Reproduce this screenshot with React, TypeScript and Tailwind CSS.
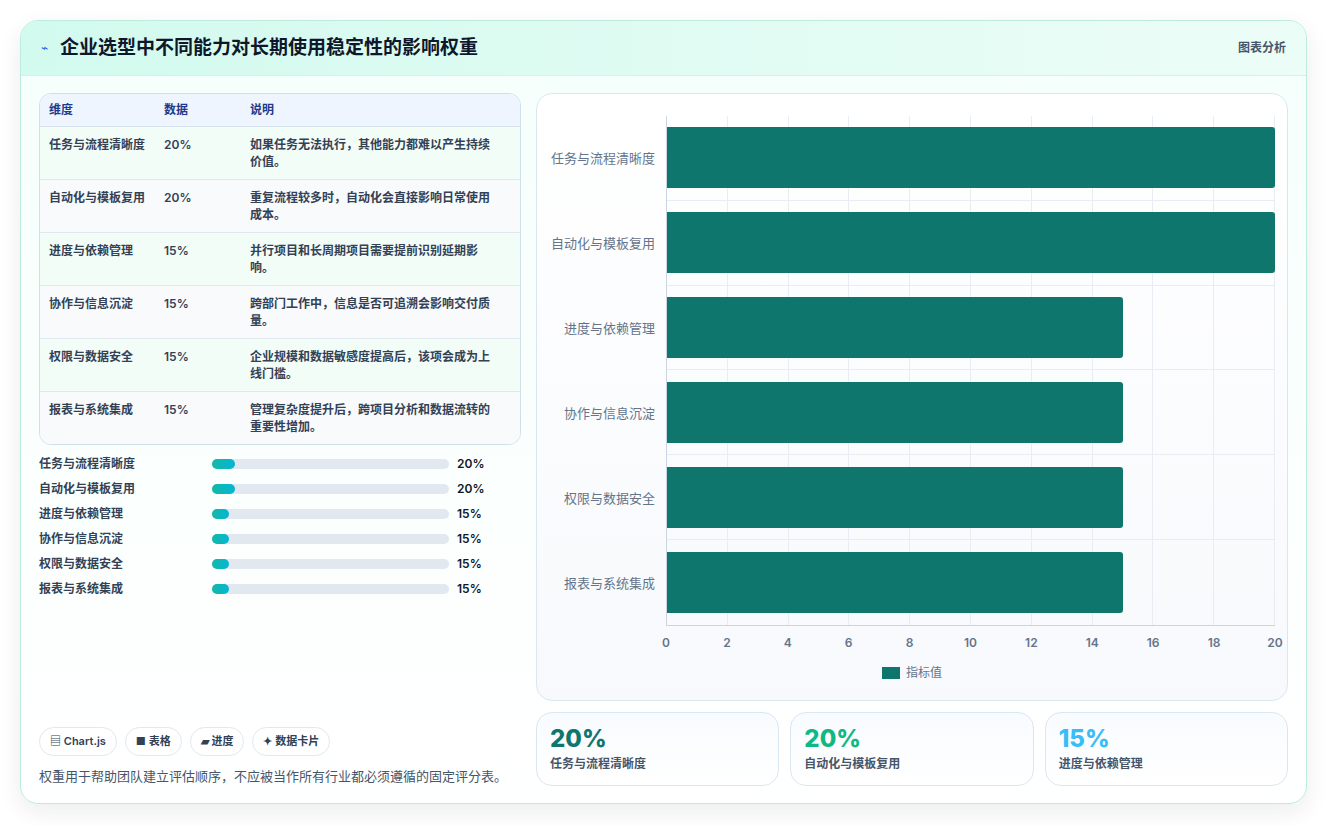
const rows = [
  { name: '任务与流程清晰度', value: 20, note: '如果任务无法执行，其他能力都难以产生持续价值。' },
  { name: '自动化与模板复用', value: 20, note: '重复流程较多时，自动化会直接影响日常使用成本。' },
  { name: '进度与依赖管理', value: 15, note: '并行项目和长周期项目需要提前识别延期影响。' },
  { name: '协作与信息沉淀', value: 15, note: '跨部门工作中，信息是否可追溯会影响交付质量。' },
  { name: '权限与数据安全', value: 15, note: '企业规模和数据敏感度提高后，该项会成为上线门槛。' },
  { name: '报表与系统集成', value: 15, note: '管理复杂度提升后，跨项目分析和数据流转的重要性增加。' },
];

const ticks = [0, 2, 4, 6, 8, 10, 12, 14, 16, 18, 20];

function Chart() {
  return (
    <div className="flex flex-1 flex-col rounded-2xl border border-[#dbe7f0] bg-gradient-to-b from-white to-[#f7f9fc] px-3 pb-5 pt-[22px]">
      <div className="flex">
        <div className="flex w-[117px] flex-col pr-[11px]">
          {rows.map((r) => (
            <div key={r.name} className="flex h-[85px] items-center justify-end text-[13px] text-[#64748b]">
              {r.name}
            </div>
          ))}
        </div>
        <div className="relative h-[510px] flex-1 border-b border-l border-[#cbd5e1]">
          <div className="absolute inset-0 flex">
            {ticks.slice(1).map((t) => (
              <div key={t} className="flex-1 border-r border-[#e8edf3]" />
            ))}
          </div>
          <div className="absolute inset-0 flex flex-col">
            {rows.map((r, i) => (
              <div key={r.name} className={`flex h-[85px] items-center ${i < 5 ? 'border-b border-[#e8edf3]' : ''}`}>
                <div className="relative h-[61px] rounded-r-[3px] bg-[#0f766e]" style={{ width: `${(r.value / 20) * 100}%` }} />
              </div>
            ))}
          </div>
        </div>
      </div>
      <div className="ml-[117px] mt-[8px] flex justify-between text-[12px] font-semibold text-[#64748b]">
        {ticks.map((t) => (
          <span key={t} className="w-0 text-center" style={{ display: 'flex', justifyContent: 'center' }}>
            {t}
          </span>
        ))}
      </div>
      <div className="mt-[12px] flex items-center justify-center gap-[6px] text-[12px] text-[#64748b]">
        <span className="h-[12px] w-[18px] bg-[#0f766e]" />
        指标值
      </div>
    </div>
  );
}

export default function App() {
  return (
    <div className="min-h-[825px] bg-white p-5" style={{ fontFamily: 'Inter, "Noto Sans CJK SC", sans-serif' }}>
      <div className="overflow-hidden rounded-[18px] border border-[#bdebdc] bg-gradient-to-b from-[#f5fffc] to-white shadow-[0_8px_24px_rgba(15,23,42,0.08)]">
        <div className="flex h-[55px] items-center justify-between border-b border-[#d4f2e8] bg-gradient-to-r from-[#d2faee] to-[#ecfdf7] px-5">
          <div className="flex items-center gap-3">
            <span className="text-[12px] text-[#2563eb]">⌁</span>
            <h1 className="text-[19px] font-bold text-[#0f172a]">企业选型中不同能力对长期使用稳定性的影响权重</h1>
          </div>
          <span className="text-[12px] font-semibold text-[#475569]">图表分析</span>
        </div>
        <div className="flex gap-[15px] px-[18px] pb-[17px] pt-[17px]">
          <div className="flex w-[482px] flex-col">
            <div className="overflow-hidden rounded-xl border border-[#cfe0ea] text-[12px]">
              <div className="flex h-[33px] items-center border-b border-[#d6e2ec] bg-[#eef5ff] px-[9px] font-semibold text-[#1e3a8a]">
                <span className="w-[115px]">维度</span>
                <span className="w-[86px]">数据</span>
                <span>说明</span>
              </div>
              {rows.map((r, i) => (
                <div key={r.name} className={`flex px-[9px] py-[9px] font-semibold text-[#334155] ${i % 2 ? 'bg-[#f8fafc]' : 'bg-[#f3fdf8]'} ${i < 5 ? 'border-b border-[#e2e8f0]' : ''}`}>
                  <span className="w-[115px] leading-[17px]">{r.name}</span>
                  <span className="w-[86px] leading-[17px]">{r.value}%</span>
                  <span className="flex-1 pr-3 leading-[17px]">{r.note}</span>
                </div>
              ))}
            </div>
            <div className="mt-[10px] flex flex-col gap-[7px]">
              {rows.map((r) => (
                <div key={r.name} className="flex h-[18px] items-center text-[12px] font-semibold text-[#334155]">
                  <span className="w-[173px]">{r.name}</span>
                  <div className="h-[10px] w-[237px] rounded-full bg-[#e2e8f0]">
                    <div className="h-full rounded-full bg-gradient-to-r from-[#14b8a6] to-[#06b6d4]" style={{ width: `${r.value / 2 * 0.95}%` }} />
                  </div>
                  <span className="ml-2 text-[#0f172a]">{r.value}%</span>
                </div>
              ))}
            </div>
            <div className="mt-auto flex gap-2 text-[11px] font-semibold text-[#334155]">
              {['▤ Chart.js', '■ 表格', '▰ 进度', '✦ 数据卡片'].map((c) => (
                <span key={c} className="rounded-full border border-[#e2e8f0] bg-white px-[10px] py-[5px]">{c}</span>
              ))}
            </div>
            <p className="mt-[11px] text-[13px] text-[#475569]">权重用于帮助团队建立评估顺序，不应被当作所有行业都必须遵循的固定评分表。</p>
          </div>
          <div className="flex flex-1 flex-col gap-[11px]">
            <div className="flex h-[608px]"><Chart /></div>
            <div className="grid grid-cols-3 gap-[11px]">
              {[
                { v: '20%', c: 'text-[#0f766e]', l: '任务与流程清晰度' },
                { v: '20%', c: 'text-[#10b981]', l: '自动化与模板复用' },
                { v: '15%', c: 'text-[#38bdf8]', l: '进度与依赖管理' },
              ].map((s) => (
                <div key={s.l} className="h-[74px] rounded-2xl border border-[#dbe7f0] bg-gradient-to-b from-[#f8fbff] to-white px-[13px] pt-[10px]">
                  <div className={`text-[24px] font-extrabold leading-[32px] ${s.c}`}>{s.v}</div>
                  <div className="text-[12px] font-semibold text-[#475569]">{s.l}</div>
                </div>
              ))}
            </div>
          </div>
        </div>
      </div>
    </div>
  );
}
